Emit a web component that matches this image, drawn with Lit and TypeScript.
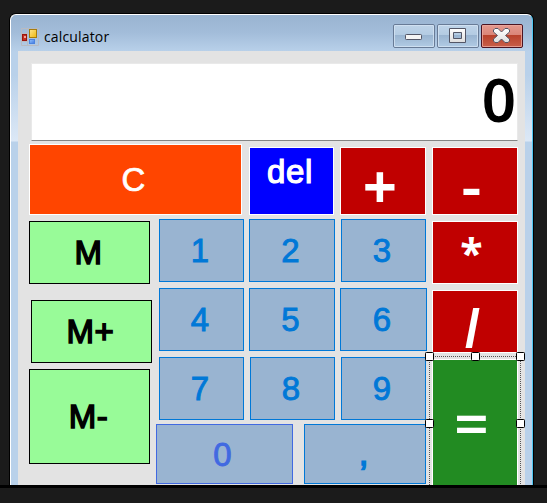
import { LitElement, html, css, svg } from "lit";
import { customElement, property } from "lit/decorators.js";

@customElement("calc-key")
class CalcKey extends LitElement {
  @property({ reflect: true }) kind = "digit";
  @property() label = "";
  static styles = css`
    :host {
      box-sizing: border-box;
      display: flex;
      align-items: center;
      justify-content: center;
      overflow: hidden;
      border: 1px solid #0078d7;
      background: #99b4d1;
      color: #0078d7;
      font: 33px/38px "Liberation Sans", Arial, sans-serif;
      -webkit-text-stroke: var(--weight, 0.9px) currentColor;
    }
    .text { margin: var(--label-margin, 0); }
    :host([kind="digit"]) .text { padding-right: 3px; }
    :host([kind="zero"]) { border-color: #4169e1; color: #4169e1; }
    :host([kind="memory"]) {
      border-color: #000; background: #98fb98; color: #000;
      -webkit-text-stroke-width: 1.5px; letter-spacing: 0.6px;
    }
    :host([kind="clear"]) { border-color: #fff; background: #ff4500; color: #fff; -webkit-text-stroke-width: 0.7px; }
    :host([kind="del"]) { border-color: #fff; background: #00f; color: #fff; -webkit-text-stroke-width: 1.2px; letter-spacing: 0.7px; }
    :host([kind="op"]), :host([kind="equals"]) {
      border-color: #fff; background: #c00000; color: #fff;
      font: var(--bold, 700) var(--size, 56px)/1 var(--face, "Open Sans"), "Noto Sans", sans-serif;
      -webkit-text-stroke-width: 0;
    }
    :host([kind="equals"]) { background: #228b22; border-bottom: 0; }
    :host([kind="op"]) .text, :host([kind="equals"]) .text { line-height: 36px; }
  `;
  render() {
    return html`<span class="text">${this.label}</span>`;
  }
}

@customElement("app-root")
class AppRoot extends LitElement {
  static styles = css`
    :host { display: block; width: 547px; height: 503px; background: #1b1b1b; overflow: hidden; }
    * { box-sizing: border-box; }
    .desktop { height: 488px; padding: 14px 14px 0 10px; border-bottom: 3px solid #000; }
    .window {
      height: 471px;
      display: flex;
      flex-direction: column;
      border: 1px solid #fff;
      border-right-color: #4fc6f0;
      border-bottom: 0;
      border-radius: 6px 6px 0 0;
      background: linear-gradient(#99b4d1 0, #a3bdda 18px, #b9d1ea 37px, #b9d1ea 60px, #dce8f6 126px, #b9d1ea 127px);
      box-shadow: 0 0 0 1px #000;
      overflow: hidden;
    }
    .title {
      height: 36px; flex: none; display: flex; align-items: center;
      padding: 0 9px 0 10px;
      font: 14px/20px "Open Sans", "Noto Sans", sans-serif; color: #000;
    }
    .name { margin-left: 5px; padding-top: 7px; letter-spacing: 0.15px; flex: 1; }
    .app-icon { margin-top: 7px; }
    .controls { display: flex; gap: 2px; padding-top: 6px; }
    .client {
      flex: 1; min-height: 0; margin: 0 7px; width: 507px; padding: 12px 7px 0 11px;
      background: #e3e3e3; display: flex; flex-direction: column;
    }
    .display {
      height: 78px; flex: none; margin: 0 0 0 2px; padding-right: 1px;
      background: #fff; border: 1px solid #e9e9e9; border-bottom-color: #848484;
      color: #000; text-align: right;
      font: 600 60px/71px "Noto Sans", "Open Sans", sans-serif;
    }
    .pad { flex: 1; min-height: 0; display: flex; padding-top: 3px; }
    .left { width: 398px; margin-right: 5px; flex: none; }
    .row { display: flex; }
    .top { height: 71px; align-items: flex-end; }
    .c { width: 213px; height: 71px; margin-right: 7px; --label-margin: 0 4px 0 0; }
    .del { width: 85px; height: 68px; margin-right: 6px; --label-margin: 0 3px 18px 0; }
    .plus { width: 86px; height: 68px; --size: 60px; --bold: 700; --label-margin: 10px 6px 0 0; }
    .lower { display: flex; }
    .memory { width: 123px; margin-right: 4px; padding-top: 6px; display: flex; flex-direction: column; gap: 6px; }
    .m { width: 121px; height: 63px; margin-bottom: 10px; --label-margin: 0 2px 0 0; }
    .mp { width: 121px; height: 63px; margin-left: 2px; --label-margin: 0 2px 0 0; }
    .mm { width: 121px; height: 95px; --label-margin: 0 2px 0 0; }
    .digits { width: 271px; padding-top: 4px; }
    .digits .row { height: 63px; margin: 0 0 6px 3px; }
    .digits .last { height: 60px; margin: -2px 0 0; }
    .d1 { width: 85px; margin-right: 5px; }
    .d2 { width: 86px; margin-right: 6px; }
    .d3 { width: 85px; }
    .d5 { width: 86px; margin-right: 5px; }
    .d6 { width: 87px; }
    .d7 { width: 85px; margin-right: 6px; }
    .d8 { width: 85px; margin-right: 6px; }
    .zero { width: 137px; margin-right: 11px; --label-margin: 1px 4px 0 0; }
    .comma { width: 122px; --label-margin: 0; --weight: 1.7px; }
    .ops { width: 86px; padding-top: 3px; display: flex; flex-direction: column; gap: 6px; }
    .minus { height: 68px; --size: 63px; --bold: 650; --label-margin: 8px 7px 0 0; }
    .times { height: 63px; --size: 41px; --label-margin: 0 7px 2px 0; }
    .divide { height: 63px; --face: "Liberation Sans"; --size: 54px; --label-margin: 12px 5px 0 0; }
    .selected { position: relative; flex: 1; min-height: 0; display: flex; }
    .equals { flex: 1; --size: 61px; --bold: 600; --label-margin: 1px 7px 0 0; }
    .selection { position: absolute; left: -7px; top: -7px; }
  `;

  control(kind: string) {
    const close = kind === "close";
    const id = "g-" + kind;
    return html`<svg width="42" height="24" viewBox="0 0 42 24">
      <defs><linearGradient id=${id} x1="0" y1="0" x2="0" y2="1">
        <stop offset="0" stop-color=${close ? "#e59a8f" : "#bfd4e9"} />
        <stop offset=".46" stop-color=${close ? "#da8578" : "#b3cbe2"} />
        <stop offset=".47" stop-color=${close ? "#b8412b" : "#99b4d0"} />
        <stop offset="1" stop-color=${close ? "#c9604b" : "#b2cce5"} />
      </linearGradient>
      <linearGradient id="glyph" x1="0" y1="0" x2="0" y2="1"><stop stop-color="#fff" /><stop offset="1" stop-color="#dedede" /></linearGradient></defs>
      <rect x=".5" y=".5" width="41" height="23" rx="1.5" fill="url(#${id})" stroke=${close ? "#4b1422" : "#687b96"} />
      <rect x="1.5" y="1.5" width="39" height="21" rx=".5" fill="none" stroke=${close ? "#eba99f" : "#d4e3f2"} stroke-opacity=".8" />
      ${kind === "min"
        ? svg`<rect x="12.5" y="10.5" width="16" height="5" rx=".8" fill="#f4f4f4" stroke="#535666" />`
        : kind === "max"
        ? svg`<path fill-rule="evenodd" d="M12.5 4.500h16v14h-16zM16.500 8.500v6h8v-6z" fill="url(#glyph)" stroke="#535666" />`
        : svg`<path d="M14 4.500h3l3.500 3.500 3.500-3.500h3l1.500 1.500v2l-4 3.500 4 3.500v2l-1.500 1.500h-3l-3.500-3.500-3.500 3.500h-3l-1.500-1.500v-2l4-3.500-4-3.500v-2z" fill="url(#glyph)" stroke="#535666" stroke-linejoin="round" />`}
    </svg>`;
  }

  render() {
    const handles = [[0, 0], [46, 0], [91, 0], [0, 67], [91, 67]];
    return html`<div class="desktop"><div class="window">
      <div class="title">
        <svg class="app-icon" width="18" height="18" viewBox="0 0 18 18">
          <defs><linearGradient id="gold" x1="0" y1="0" x2="1" y2="1"><stop stop-color="#ffe58c" /><stop offset="1" stop-color="#eeb70c" /></linearGradient>
          <linearGradient id="sky" x1="0" y1="0" x2="1" y2="1"><stop stop-color="#94c4ff" /><stop offset="1" stop-color="#3f78e0" /></linearGradient></defs>
          <path d="M.5.5h17v17H.5zM6.500 0v18M0 5.500h7M0 13.500h7" fill="none" stroke="#b8bbc2" />
          <rect x="1.500" y="6.500" width="4" height="6" fill="#c43120" stroke="#9b1510" /><rect x="3" y="8" width="2" height="2" fill="#f0a299" />
          <rect x="8.500" y="1.500" width="7" height="8" fill="url(#gold)" stroke="#a87c0b" />
          <rect x="8.500" y="11.500" width="5" height="4" fill="url(#sky)" stroke="#4c83df" />
        </svg>
        <span class="name">calculator</span>
        <div class="controls">${this.control("min")}${this.control("max")}${this.control("close")}</div>
      </div>
      <div class="client">
        <div class="display">0</div>
        <div class="pad">
          <div class="left">
            <div class="row top">
              <calc-key class="c" kind="clear" label="C"></calc-key>
              <calc-key class="del" kind="del" label="del"></calc-key>
              <calc-key class="plus" kind="op" label="+"></calc-key>
            </div>
            <div class="lower">
              <div class="memory">
                <calc-key class="m" kind="memory" label="M"></calc-key>
                <calc-key class="mp" kind="memory" label="M+"></calc-key>
                <calc-key class="mm" kind="memory" label="M-"></calc-key>
              </div>
              <div class="digits">
                <div class="row">
                  <calc-key class="d1" label="1"></calc-key><calc-key class="d2" label="2"></calc-key><calc-key class="d3" label="3"></calc-key>
                </div>
                <div class="row">
                  <calc-key class="d1" label="4"></calc-key><calc-key class="d5" label="5"></calc-key><calc-key class="d6" label="6"></calc-key>
                </div>
                <div class="row">
                  <calc-key class="d7" label="7"></calc-key><calc-key class="d8" label="8"></calc-key><calc-key class="d3" label="9"></calc-key>
                </div>
                <div class="row last">
                  <calc-key class="zero" kind="zero" label="0"></calc-key><calc-key class="comma" label=","></calc-key>
                </div>
              </div>
            </div>
          </div>
          <div class="ops">
            <calc-key class="minus" kind="op" label="-"></calc-key>
            <calc-key class="times" kind="op" label="*"></calc-key>
            <calc-key class="divide" kind="op" label="/"></calc-key>
            <div class="selected">
              <calc-key class="equals" kind="equals" label="="></calc-key>
              <svg class="selection" width="100" height="133" viewBox="0 0 100 133">
                <path d="M4.500 133V4.500H95.500V133" fill="none" stroke="#e3e3e3" stroke-width="3" />
                <path d="M4.500 133V4.500H95.500V133" fill="none" stroke="#555" stroke-dasharray="1 1" />
                ${handles.map(([x, y]) => svg`<rect x=${x + 0.5} y=${y + 0.5} width="8" height="8" rx=".8" fill="#fff" stroke="#000" />`)}
              </svg>
            </div>
          </div>
        </div>
      </div>
    </div></div>`;
  }
}
